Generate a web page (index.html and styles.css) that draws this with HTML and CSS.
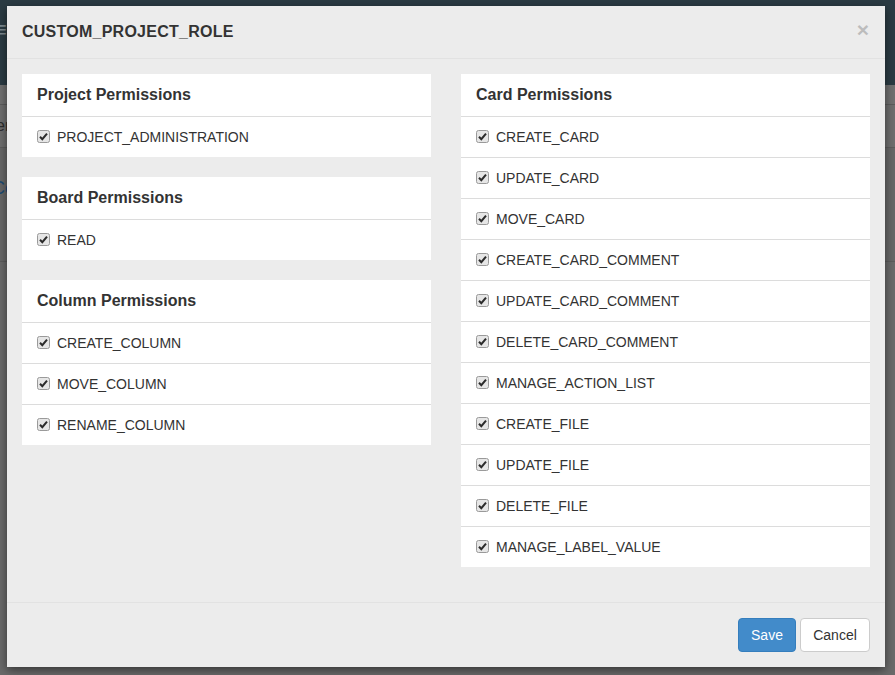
FILE: index.html
```html
<!DOCTYPE html>
<html>
<head>
<meta charset="utf-8">
<link rel="stylesheet" href="styles.css">
</head>
<body>
<div class="page">
  <div class="topbar"><span class="burger">&#8801;</span></div>
  <div class="band band1"></div>
  <div class="band band2"><span class="bg-text">er</span></div>
  <div class="band band3"><span class="bg-link">Co</span></div>
  <div class="band band4"></div>
</div>

<div class="modal">
  <div class="modal-header">
    <h4 class="modal-title">CUSTOM_PROJECT_ROLE</h4>
    <span class="close">&times;</span>
  </div>
  <div class="modal-body">
    <div class="col">
      <div class="panel">
        <div class="panel-heading">Project Permissions</div>
        <div class="item"><span class="cb"><svg viewBox="0 0 13 13" width="13" height="13"><rect x="0.5" y="0.5" width="12" height="12" rx="2" fill="#e6e6e6" stroke="#9a9a9a"/><path d="M3 6.8 L5.3 9.2 L10 3.6" fill="none" stroke="#2b2b2b" stroke-width="2"/></svg></span>PROJECT_ADMINISTRATION</div>
      </div>
      <div class="panel">
        <div class="panel-heading">Board Permissions</div>
        <div class="item"><span class="cb"><svg viewBox="0 0 13 13" width="13" height="13"><rect x="0.5" y="0.5" width="12" height="12" rx="2" fill="#e6e6e6" stroke="#9a9a9a"/><path d="M3 6.8 L5.3 9.2 L10 3.6" fill="none" stroke="#2b2b2b" stroke-width="2"/></svg></span>READ</div>
      </div>
      <div class="panel">
        <div class="panel-heading">Column Permissions</div>
        <div class="item"><span class="cb"><svg viewBox="0 0 13 13" width="13" height="13"><rect x="0.5" y="0.5" width="12" height="12" rx="2" fill="#e6e6e6" stroke="#9a9a9a"/><path d="M3 6.8 L5.3 9.2 L10 3.6" fill="none" stroke="#2b2b2b" stroke-width="2"/></svg></span>CREATE_COLUMN</div>
        <div class="item"><span class="cb"><svg viewBox="0 0 13 13" width="13" height="13"><rect x="0.5" y="0.5" width="12" height="12" rx="2" fill="#e6e6e6" stroke="#9a9a9a"/><path d="M3 6.8 L5.3 9.2 L10 3.6" fill="none" stroke="#2b2b2b" stroke-width="2"/></svg></span>MOVE_COLUMN</div>
        <div class="item"><span class="cb"><svg viewBox="0 0 13 13" width="13" height="13"><rect x="0.5" y="0.5" width="12" height="12" rx="2" fill="#e6e6e6" stroke="#9a9a9a"/><path d="M3 6.8 L5.3 9.2 L10 3.6" fill="none" stroke="#2b2b2b" stroke-width="2"/></svg></span>RENAME_COLUMN</div>
      </div>
    </div>
    <div class="col">
      <div class="panel">
        <div class="panel-heading">Card Permissions</div>
        <div class="item"><span class="cb"><svg viewBox="0 0 13 13" width="13" height="13"><rect x="0.5" y="0.5" width="12" height="12" rx="2" fill="#e6e6e6" stroke="#9a9a9a"/><path d="M3 6.8 L5.3 9.2 L10 3.6" fill="none" stroke="#2b2b2b" stroke-width="2"/></svg></span>CREATE_CARD</div>
        <div class="item"><span class="cb"><svg viewBox="0 0 13 13" width="13" height="13"><rect x="0.5" y="0.5" width="12" height="12" rx="2" fill="#e6e6e6" stroke="#9a9a9a"/><path d="M3 6.8 L5.3 9.2 L10 3.6" fill="none" stroke="#2b2b2b" stroke-width="2"/></svg></span>UPDATE_CARD</div>
        <div class="item"><span class="cb"><svg viewBox="0 0 13 13" width="13" height="13"><rect x="0.5" y="0.5" width="12" height="12" rx="2" fill="#e6e6e6" stroke="#9a9a9a"/><path d="M3 6.8 L5.3 9.2 L10 3.6" fill="none" stroke="#2b2b2b" stroke-width="2"/></svg></span>MOVE_CARD</div>
        <div class="item"><span class="cb"><svg viewBox="0 0 13 13" width="13" height="13"><rect x="0.5" y="0.5" width="12" height="12" rx="2" fill="#e6e6e6" stroke="#9a9a9a"/><path d="M3 6.8 L5.3 9.2 L10 3.6" fill="none" stroke="#2b2b2b" stroke-width="2"/></svg></span>CREATE_CARD_COMMENT</div>
        <div class="item"><span class="cb"><svg viewBox="0 0 13 13" width="13" height="13"><rect x="0.5" y="0.5" width="12" height="12" rx="2" fill="#e6e6e6" stroke="#9a9a9a"/><path d="M3 6.8 L5.3 9.2 L10 3.6" fill="none" stroke="#2b2b2b" stroke-width="2"/></svg></span>UPDATE_CARD_COMMENT</div>
        <div class="item"><span class="cb"><svg viewBox="0 0 13 13" width="13" height="13"><rect x="0.5" y="0.5" width="12" height="12" rx="2" fill="#e6e6e6" stroke="#9a9a9a"/><path d="M3 6.8 L5.3 9.2 L10 3.6" fill="none" stroke="#2b2b2b" stroke-width="2"/></svg></span>DELETE_CARD_COMMENT</div>
        <div class="item"><span class="cb"><svg viewBox="0 0 13 13" width="13" height="13"><rect x="0.5" y="0.5" width="12" height="12" rx="2" fill="#e6e6e6" stroke="#9a9a9a"/><path d="M3 6.8 L5.3 9.2 L10 3.6" fill="none" stroke="#2b2b2b" stroke-width="2"/></svg></span>MANAGE_ACTION_LIST</div>
        <div class="item"><span class="cb"><svg viewBox="0 0 13 13" width="13" height="13"><rect x="0.5" y="0.5" width="12" height="12" rx="2" fill="#e6e6e6" stroke="#9a9a9a"/><path d="M3 6.8 L5.3 9.2 L10 3.6" fill="none" stroke="#2b2b2b" stroke-width="2"/></svg></span>CREATE_FILE</div>
        <div class="item"><span class="cb"><svg viewBox="0 0 13 13" width="13" height="13"><rect x="0.5" y="0.5" width="12" height="12" rx="2" fill="#e6e6e6" stroke="#9a9a9a"/><path d="M3 6.8 L5.3 9.2 L10 3.6" fill="none" stroke="#2b2b2b" stroke-width="2"/></svg></span>UPDATE_FILE</div>
        <div class="item"><span class="cb"><svg viewBox="0 0 13 13" width="13" height="13"><rect x="0.5" y="0.5" width="12" height="12" rx="2" fill="#e6e6e6" stroke="#9a9a9a"/><path d="M3 6.8 L5.3 9.2 L10 3.6" fill="none" stroke="#2b2b2b" stroke-width="2"/></svg></span>DELETE_FILE</div>
        <div class="item"><span class="cb"><svg viewBox="0 0 13 13" width="13" height="13"><rect x="0.5" y="0.5" width="12" height="12" rx="2" fill="#e6e6e6" stroke="#9a9a9a"/><path d="M3 6.8 L5.3 9.2 L10 3.6" fill="none" stroke="#2b2b2b" stroke-width="2"/></svg></span>MANAGE_LABEL_VALUE</div>
      </div>
    </div>
  </div>
  <div class="modal-footer">
    <button class="btn btn-primary">Save</button>
    <button class="btn btn-default">Cancel</button>
  </div>
</div>
</body>
</html>
```
FILE: styles.css
```css
* { box-sizing: border-box; }
html, body {
  margin: 0;
  padding: 0;
  width: 895px;
  height: 675px;
  overflow: hidden;
  font-family: "Liberation Sans", Arial, sans-serif;
  color: #333;
  font-size: 14px;
}
body { background: #6a6a6a; }

.page { width: 895px; height: 675px; }
.topbar {
  height: 85px;
  background: #2b3b43;
  padding-top: 20px;
}
.burger {
  display: block;
  color: #7d8a90;
  font-size: 22px;
  line-height: 20px;
  margin-left: -6px;
}
.band { border-bottom: 1px solid #5c5c5c; }
.band1 { height: 20px; background: #707070; }
.band2 { height: 43px; background: #6e6e6e; padding-top: 12px; }
.band3 { height: 114px; background: #676767; padding-top: 30px; }
.band4 { height: 420px; background: #6a6a6a; }
.bg-text { color: #2c2c2c; font-size: 16px; margin-left: -4px; }
.bg-link { color: #1d4a72; font-size: 18px; margin-left: -8px; }

.modal {
  position: absolute;
  left: 7px;
  top: 6px;
  width: 878px;
  height: 661px;
  background: #ececec;
  box-shadow: 0 3px 9px rgba(0,0,0,0.5);
  display: flex;
  flex-direction: column;
}
.modal-header {
  height: 53px;
  padding: 15px;
  border-bottom: 1px solid #e2e2e2;
  display: flex;
  justify-content: space-between;
  align-items: flex-start;
}
.modal-title {
  margin: 0;
  font-size: 16px;
  font-weight: bold;
  line-height: 22px;
  letter-spacing: 0.25px;
  color: #333;
}
.close {
  font-size: 21px;
  font-weight: bold;
  line-height: 18px;
  color: #000;
  opacity: 0.2;
  margin-right: 1px;
}
.modal-body {
  flex: 1;
  padding: 15px;
  display: grid;
  grid-template-columns: 409px 409px;
  column-gap: 30px;
  align-content: start;
}
.panel {
  background: #fff;
  margin-bottom: 20px;
}
.panel-heading {
  height: 42px;
  padding: 0 15px;
  font-size: 16px;
  font-weight: bold;
  line-height: 42px;
  color: #333;
}
.item {
  height: 41px;
  border-top: 1px solid #dcdcdc;
  padding: 0 15px;
  display: flex;
  align-items: center;
  font-size: 14px;
  color: #333;
}
.cb {
  width: 13px;
  height: 13px;
  margin-right: 7px;
  display: inline-flex;
  margin-top: -1px;
}
.cb svg { display: block; }

.modal-footer {
  height: 65px;
  border-top: 1px solid #e2e2e2;
  padding: 15px;
  display: flex;
  justify-content: flex-end;
  gap: 4px;
}
.btn {
  height: 34px;
  font-family: "Liberation Sans", Arial, sans-serif;
  font-size: 14px;
  padding: 6px 12px;
  border-radius: 4px;
  border: 1px solid transparent;
  line-height: 20px;
}
.btn-primary {
  width: 58px;
  background: #428bca;
  border-color: #357ebd;
  color: #fff;
}
.btn-default {
  width: 70px;
  background: #fff;
  border-color: #ccc;
  color: #333;
}
```
